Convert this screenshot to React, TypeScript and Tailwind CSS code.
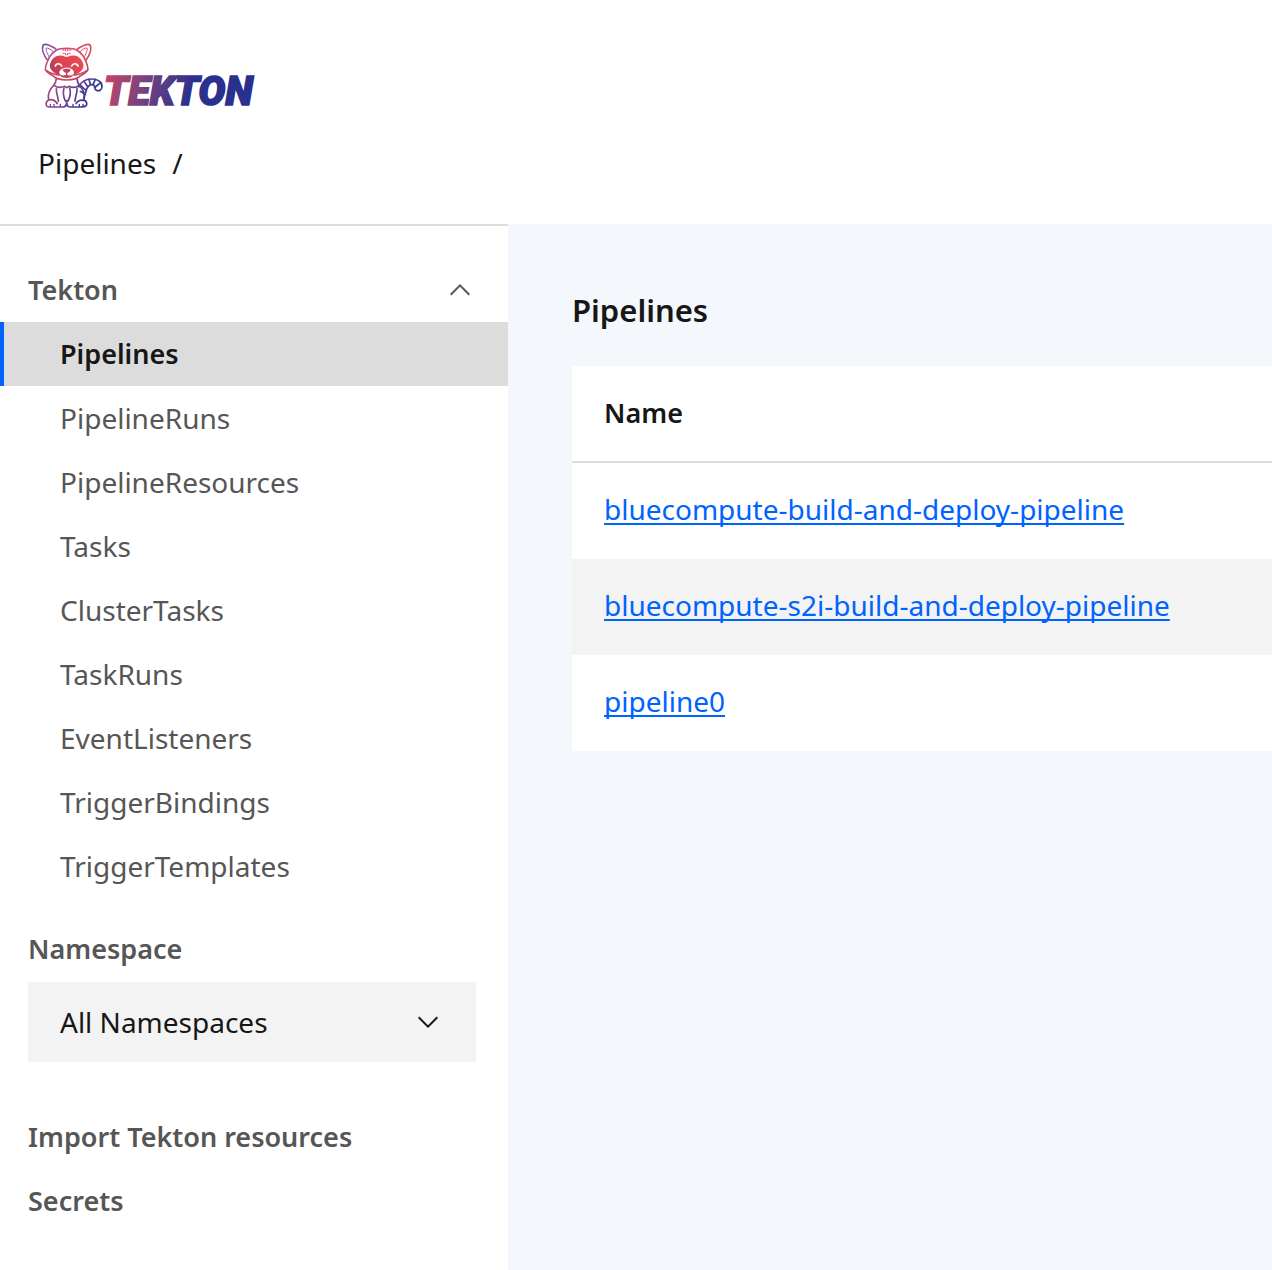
const navItems = [
  "Pipelines",
  "PipelineRuns",
  "PipelineResources",
  "Tasks",
  "ClusterTasks",
  "TaskRuns",
  "EventListeners",
  "TriggerBindings",
  "TriggerTemplates",
];

const pipelines = [
  "bluecompute-build-and-deploy-pipeline",
  "bluecompute-s2i-build-and-deploy-pipeline",
  "pipeline0",
];

function Logo() {
  return (
    <svg viewBox="0 0 672 240" className="block h-20 w-56 overflow-visible" role="img" aria-label="Tekton">
      <defs>
        <linearGradient id="cat" gradientUnits="userSpaceOnUse" x1="10" y1="0" x2="175" y2="215">
          <stop offset="0" stopColor="#4b4fb0" />
          <stop offset="0.2" stopColor="#a4559a" />
          <stop offset="0.36" stopColor="#e04a5c" />
          <stop offset="0.6" stopColor="#c94460" />
          <stop offset="0.8" stopColor="#8a4184" />
          <stop offset="1" stopColor="#2b3090" />
        </linearGradient>
        <linearGradient id="face" gradientUnits="userSpaceOnUse" x1="45" y1="115" x2="125" y2="45">
          <stop offset="0" stopColor="#a83c60" />
          <stop offset="0.5" stopColor="#da4551" />
          <stop offset="1" stopColor="#f04a52" />
        </linearGradient>
        <linearGradient id="body" gradientUnits="userSpaceOnUse" x1="40" y1="110" x2="165" y2="200">
          <stop offset="0" stopColor="#b84a72" />
          <stop offset="0.4" stopColor="#84448c" />
          <stop offset="0.75" stopColor="#443a94" />
          <stop offset="1" stopColor="#2b3090" />
        </linearGradient>
        <linearGradient id="word" gradientUnits="userSpaceOnUse" x1="200" y1="110" x2="460" y2="190">
          <stop offset="0" stopColor="#c8486a" />
          <stop offset="0.5" stopColor="#74417f" />
          <stop offset="1" stopColor="#29308d" />
        </linearGradient>
      </defs>

      {/* Tail */}
      <g fill="none" stroke="url(#body)" strokeWidth="5" strokeLinecap="round" strokeLinejoin="round">
        <path d="M129 147C134 132 148 123 168 123C188 123 199 134 198 147C197 157 188 161 180 156C174 152 178 145 173 141C160 136 151 150 149 163C147 171 145 176 143 180" />
        <path d="M133 141L149 156M144 130L155 146M159 124L163 139M178 124L171 140M194 134L178 147M133 160L146 168" />
      </g>

      {/* Body and paws */}
      <g fill="none" stroke="url(#body)" strokeWidth="5" strokeLinecap="round" strokeLinejoin="round">
        <path d="M61 121C60 131 58 137 53 142C41 154 34 170 38 186C31 189 30 196 31 202C32 207 38 207 48 207H82C89 207 91 202 92 196C93 203 97 207 103 207H137C148 207 154 203 152 196C151 190 147 187 144 187C148 170 141 154 131 143C126 138 124 130 123 121" />
        <path d="M56 143C66 151 76 149 87 145C91 150 94 150 98 145C108 149 119 151 128 143" />
        <path d="M38 186C49 183 58 188 64 197M144 187C132 184 125 189 120 197" />
        <path d="M61 151C60 166 67 177 67 190M123 151C124 166 117 177 117 190" />
        <path d="M84 150C80 163 83 178 88 189M101 150C105 163 102 178 96 189M92 188V200" />
        <path d="M43 199V205M54 199V205M130 199V205M141 199V205M73 199V205M111 199V205" strokeWidth="4" />
      </g>

      {/* Ears and head */}
      <g fill="#fff" stroke="url(#cat)" strokeWidth="5" strokeLinecap="round" strokeLinejoin="round">
        <path d="M36 69C22 50 17 32 21 22C27 15 49 23 63 36" />
        <path d="M40 57C31 43 29 34 31 30C36 29 46 35 53 42" strokeWidth="3" />
        <path d="M148 69C162 50 167 32 163 22C157 15 135 23 121 36" />
        <path d="M144 57C153 43 155 34 153 30C148 29 138 35 131 42" strokeWidth="3" />
        <path d="M62 36C73 29 111 29 122 36C136 45 145 56 149 69C153 77 156 86 156 95C150 105 143 109 134 113C124 123 108 126 92 126C76 126 60 123 50 113C41 109 34 105 28 95C28 86 31 77 35 69C39 56 48 45 62 36Z" />
      </g>
      <path d="M88 56C72 49 56 54 48 65C40 77 39 89 48 98C56 106 64 109 71 112C78 119 85 120 92 120C99 120 106 119 113 112C120 109 128 106 136 98C145 89 144 77 136 65C128 54 112 49 96 56Z" fill="url(#face)" />
      <path d="M31 97C45 107 58 110 70 112M153 97C139 107 126 110 114 112" fill="none" stroke="#c54461" strokeWidth="4" />
      <path d="M58 84C61 75 73 75 77 84M107 84C111 75 123 75 126 84" fill="none" stroke="#fff" strokeWidth="5" strokeLinecap="round" />
      <path d="M92 89C104 88 114 96 114 104C113 113 101 114 92 110C83 114 71 113 70 104C70 96 80 88 92 89Z" fill="#fff" />
      <path d="M80 95C85 91 99 91 104 95C103 101 97 104 92 106C87 104 81 101 80 95Z" fill="#c5415c" />
      <path d="M92 105V111" fill="none" stroke="#b94162" strokeWidth="4" />
      <path d="M89 33V40M95 33V40M89 45V52M95 45V52M78 36H86M98 36H106M80 46H86M98 46H104" fill="none" stroke="#e5455b" strokeWidth="3" />

      <text
        x="203"
        y="202"
        fill="url(#word)"
        stroke="url(#word)"
        strokeWidth="5"
        className="font-['Roboto',sans-serif] text-[120px] leading-none font-black italic"
      >
        TEKTON
      </text>
    </svg>
  );
}

function Chevron({ up = false }: { up?: boolean }) {
  return (
    <svg viewBox="0 0 20 12" className="h-3 w-5 shrink-0" fill="none" stroke="currentColor" strokeWidth="2" aria-hidden="true">
      <path d={up ? "M0.7 10.7L10 1.4L19.3 10.7" : "M0.7 1.3L10 10.6L19.3 1.3"} />
    </svg>
  );
}

export default function App() {
  return (
    <div className="flex min-h-screen flex-col bg-white font-['Noto_Sans',sans-serif] text-[28px] leading-10 text-[#171717]">
      <header className="flex h-56 flex-col items-start pt-[38px]">
        <a href="#home" className="ml-9">
          <Logo />
        </a>
        <nav aria-label="Breadcrumb" className="mt-[25px] ml-[38px] flex gap-4">
          <a href="#pipelines">Pipelines</a>
          <span>/</span>
        </nav>
      </header>

      <div className="flex grow">
        <aside className="w-[508px] shrink-0 border-t-2 border-[#dcdcdc] pt-8 text-[#565656]">
          <nav aria-label="Main">
            <button type="button" aria-expanded="true" className="flex h-16 w-full items-center justify-between pr-[38px] pl-7 text-[27px] font-semibold">
              Tekton
              <Chevron up />
            </button>
            <ul>
              {navItems.map((item, i) => (
                <li key={item}>
                  <a
                    href={`#${item}`}
                    aria-current={i === 0 ? "page" : undefined}
                    className={
                      i === 0
                        ? "flex h-16 items-center border-l-4 border-[#0062ff] bg-[#dcdcdc] pl-14 text-[27px] font-semibold text-[#171717]"
                        : "flex h-16 items-center pl-15"
                    }
                  >
                    {item}
                  </a>
                </li>
              ))}
            </ul>
          </nav>

          <div className="mt-[31px] px-7">
            <label htmlFor="namespace" className="block text-[27px] font-semibold">
              Namespace
            </label>
            <div className="relative mt-[13px] mr-1 text-[#171717]">
              <select id="namespace" className="block h-20 w-full appearance-none bg-[#f3f3f3] pr-20 pl-8">
                <option>All Namespaces</option>
              </select>
              <span className="pointer-events-none absolute inset-y-0 right-[38px] flex items-center">
                <Chevron />
              </span>
            </div>
          </div>

          <nav aria-label="Resources" className="mt-[43px] text-[27px] font-semibold">
            <a href="#import" className="flex h-16 items-center pl-7">
              Import Tekton resources
            </a>
            <a href="#secrets" className="flex h-16 items-center pl-7">
              Secrets
            </a>
          </nav>
        </aside>

        <main className="min-w-0 grow bg-[#f4f7fb] pt-[66px] pl-16">
          <h1 className="text-[31px] font-semibold">Pipelines</h1>
          <table className="mt-9 w-full border-separate border-spacing-0 bg-white text-left">
            <thead>
              <tr>
                <th scope="col" className="h-[97px] border-b-2 border-[#dcdcdc] pb-0.5 pl-8 text-[27px] font-semibold">
                  Name
                </th>
              </tr>
            </thead>
            <tbody>
              {pipelines.map((name) => (
                <tr key={name} className="h-24 even:bg-[#f3f3f3]">
                  <td className="pb-1 pl-8">
                    <a
                      href={`#${name}`}
                      className="text-[#0062ff] underline decoration-2 underline-offset-3 [text-decoration-skip-ink:none]"
                    >
                      {name}
                    </a>
                  </td>
                </tr>
              ))}
            </tbody>
          </table>
        </main>
      </div>
    </div>
  );
}
